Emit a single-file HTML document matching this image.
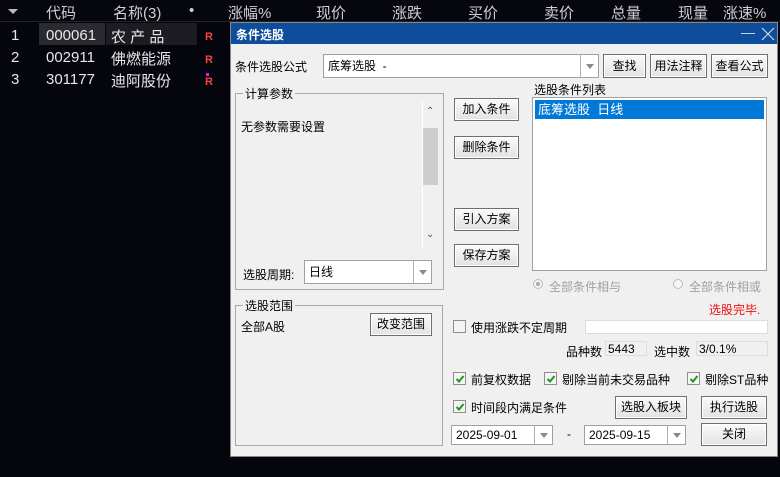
<!DOCTYPE html>
<html><head><meta charset="utf-8"><style>
*{margin:0;padding:0;box-sizing:border-box}
body{width:780px;height:477px;background:#05050d;position:relative;overflow:hidden;font-family:"Liberation Sans","Noto Sans CJK SC",sans-serif;font-size:14px}
.a{position:absolute;white-space:nowrap}
.h{color:#cfcfcf;font-size:15px;top:2px}
.w{color:#e8e8e8;font-size:15px}
.d{font-size:12px;color:#000}
.btn{position:absolute;border:1px solid #6e6e6e;background:linear-gradient(#fafafa,#e2e2e2);font-size:12px;text-align:center;color:#000;box-shadow:inset 0 0 0 1px #fff}
.inp{position:absolute;background:#fff;border:1px solid #a0a0a0;font-size:12px;padding-left:4px}
.arr{position:absolute;right:0;top:0;bottom:0;width:18px;border-left:1px solid #b0b0b0}
.arr:after{content:"";position:absolute;left:5px;top:50%;margin-top:-2px;border:4px solid transparent;border-top:5px solid #8a8a8a;border-bottom:0}
.cb{position:absolute;width:13px;height:13px;border:1px solid #8f8f8f;background:#f4f4f4}
.cb svg{position:absolute;left:1px;top:1px}
.grp{position:absolute;border:1px solid #a9a9a9}
.lg{position:absolute;top:-9px;left:7px;background:#f0f0f0;padding:0 2px;font-size:12px}
</style></head><body>
<div class="a" style="left:0;top:0;width:780px;height:22px;background:#06060e;border-bottom:1px solid #222"></div>
<div class="a" style="left:8px;top:9px;border:5px solid transparent;border-top:5px solid #bbb;border-bottom:0"></div>
<div class="a h" style="left:46px">代码</div>
<div class="a h" style="left:113px">名称(3)</div>
<div class="a h" style="left:189px">•</div>
<div class="a h" style="left:228px">涨幅%</div>
<div class="a h" style="left:316px">现价</div>
<div class="a h" style="left:392px">涨跌</div>
<div class="a h" style="left:468px">买价</div>
<div class="a h" style="left:544px">卖价</div>
<div class="a h" style="left:611px">总量</div>
<div class="a h" style="left:678px">现量</div>
<div class="a h" style="left:723px">涨速%</div>
<div class="a" style="left:39px;top:23px;width:66px;height:22px;background:#2a2b30"></div>
<div class="a" style="left:106px;top:23px;width:91px;height:22px;background:#1c1c22"></div>
<div class="a w" style="left:11px;top:27px">1</div><div class="a w" style="left:46px;top:27px">000061</div><div class="a w" style="left:111px;top:26px">农 产 品</div>
<div class="a w" style="left:11px;top:49px">2</div><div class="a w" style="left:46px;top:49px">002911</div><div class="a w" style="left:111px;top:48px">佛燃能源</div>
<div class="a w" style="left:11px;top:71px">3</div><div class="a w" style="left:46px;top:71px">301177</div><div class="a w" style="left:111px;top:70px">迪阿股份</div>
<div class="a" style="left:205px;top:31px;color:#ff4040;font-weight:bold;font-size:11px">R</div>
<div class="a" style="left:205px;top:54px;color:#ff4040;font-weight:bold;font-size:11px">R</div>
<div class="a" style="left:205px;top:76px;color:#ff4040;font-weight:bold;font-size:11px">R</div>
<div class="a" style="left:206px;top:73px;width:3px;height:3px;background:#e020e0"></div>

<div class="a" style="left:230px;top:22px;width:548px;height:435px;background:#f0f0f0;border:1px solid #888">
 <div class="a" style="left:0;top:0;width:546px;height:21px;background:#0d4d9c"></div>
 <div class="a" style="left:5px;top:3px;color:#fff;font-weight:bold;font-size:12px">条件选股</div>
 <div class="a" style="left:510px;top:10px;width:14px;height:1px;background:#c8d4e8"></div>
 <svg class="a" style="left:530px;top:4px" width="14" height="14"><path d="M1 1L13 13M13 1L1 13" stroke="#c8d4e8" stroke-width="1.2"/></svg>

 <div class="a d" style="left:4px;top:35px">条件选股公式</div>
 <div class="inp" style="left:92px;top:31px;width:276px;height:24px;line-height:22px">底筹选股&nbsp; -<div class="arr"></div></div>
 <div class="btn" style="left:372px;top:31px;width:43px;height:24px;line-height:22px">查找</div>
 <div class="btn" style="left:419px;top:31px;width:57px;height:24px;line-height:22px">用法注释</div>
 <div class="btn" style="left:480px;top:31px;width:57px;height:24px;line-height:22px">查看公式</div>

 <div class="grp" style="left:4px;top:70px;width:209px;height:197px"><div class="lg">计算参数</div>
  <div class="a d" style="left:5px;top:24px">无参数需要设置</div>
  <div class="a" style="left:186px;top:7px;width:1px;height:148px;background:#fff"></div>
  <div class="a" style="left:187px;top:34px;width:15px;height:57px;background:#cdcdcd"></div>
  <div class="a" style="left:190px;top:12px;font-size:10px;color:#555">&#8963;</div>
  <div class="a" style="left:190px;top:135px;font-size:10px;color:#555">&#8964;</div>
  <div class="a d" style="left:7px;top:172px">选股周期:</div>
  <div class="inp" style="left:68px;top:166px;width:128px;height:24px;line-height:22px">日线<div class="arr"></div></div>
 </div>
 <div class="btn" style="left:223px;top:75px;width:65px;height:23px;line-height:21px">加入条件</div>
 <div class="btn" style="left:223px;top:113px;width:65px;height:23px;line-height:21px">删除条件</div>
 <div class="btn" style="left:223px;top:185px;width:65px;height:23px;line-height:21px">引入方案</div>
 <div class="btn" style="left:223px;top:221px;width:65px;height:23px;line-height:21px">保存方案</div>

 <div class="a d" style="left:303px;top:58px">选股条件列表</div>
 <div class="a" style="left:301px;top:74px;width:235px;height:174px;background:#fff;border:1px solid #a0a0a0">
  <div class="a" style="left:2px;top:2px;width:229px;height:19px;background:#0078d7;color:#fff;font-size:13px;padding-left:3px;line-height:19px">底筹选股&nbsp; 日线</div>
 </div>
 <div class="a" style="left:302px;top:256px;width:10px;height:10px;border-radius:50%;border:1px solid #bbb;background:#f6f6f6"><div class="a" style="left:2px;top:2px;width:4px;height:4px;border-radius:50%;background:#aaa"></div></div>
 <div class="a d" style="left:318px;top:255px;color:#a0a0a0">全部条件相与</div>
 <div class="a" style="left:442px;top:256px;width:10px;height:10px;border-radius:50%;border:1px solid #bbb;background:#f6f6f6"></div>
 <div class="a d" style="left:458px;top:255px;color:#a0a0a0">全部条件相或</div>
 <div class="a d" style="left:478px;top:278px;color:#f01010">选股完毕.</div>

 <div class="grp" style="left:4px;top:282px;width:208px;height:141px"><div class="lg">选股范围</div>
  <div class="a d" style="left:5px;top:12px">全部A股</div>
  <div class="btn" style="left:134px;top:7px;width:62px;height:23px;line-height:21px">改变范围</div>
 </div>

 <div class="cb" style="left:222px;top:297px"></div>
 <div class="a d" style="left:240px;top:296px">使用涨跌不定周期</div>
 <div class="a" style="left:354px;top:297px;width:183px;height:14px;background:#fff;border:1px solid #ddd"></div>
 <div class="a d" style="left:335px;top:320px">品种数</div>
 <div class="a d" style="left:374px;top:318px;width:42px;height:15px;border:1px solid #ddd;padding-left:2px">5443</div>
 <div class="a d" style="left:423px;top:320px">选中数</div>
 <div class="a d" style="left:465px;top:318px;width:72px;height:15px;border:1px solid #ddd;padding-left:2px">3/0.1%</div>

 <div class="cb" style="left:222px;top:349px"><svg width="10" height="10"><path d="M1.5 5L4 7.5 8.5 2" stroke="#1a9a1a" stroke-width="2" fill="none"/></svg></div>
 <div class="a d" style="left:240px;top:348px">前复权数据</div>
 <div class="cb" style="left:313px;top:349px"><svg width="10" height="10"><path d="M1.5 5L4 7.5 8.5 2" stroke="#1a9a1a" stroke-width="2" fill="none"/></svg></div>
 <div class="a d" style="left:331px;top:348px">剔除当前未交易品种</div>
 <div class="cb" style="left:456px;top:349px"><svg width="10" height="10"><path d="M1.5 5L4 7.5 8.5 2" stroke="#1a9a1a" stroke-width="2" fill="none"/></svg></div>
 <div class="a d" style="left:474px;top:348px">剔除ST品种</div>

 <div class="cb" style="left:222px;top:377px"><svg width="10" height="10"><path d="M1.5 5L4 7.5 8.5 2" stroke="#1a9a1a" stroke-width="2" fill="none"/></svg></div>
 <div class="a d" style="left:240px;top:376px">时间段内满足条件</div>
 <div class="btn" style="left:384px;top:373px;width:72px;height:23px;line-height:21px">选股入板块</div>
 <div class="btn" style="left:470px;top:373px;width:66px;height:23px;line-height:21px">执行选股</div>
 <div class="inp" style="left:220px;top:402px;width:102px;height:20px;line-height:18px">2025-09-01<div class="arr"></div></div>
 <div class="a d" style="left:336px;top:404px">-</div>
 <div class="inp" style="left:353px;top:402px;width:102px;height:20px;line-height:18px">2025-09-15<div class="arr"></div></div>
 <div class="btn" style="left:470px;top:400px;width:66px;height:23px;line-height:21px">关闭</div>
</div>
</body></html>
